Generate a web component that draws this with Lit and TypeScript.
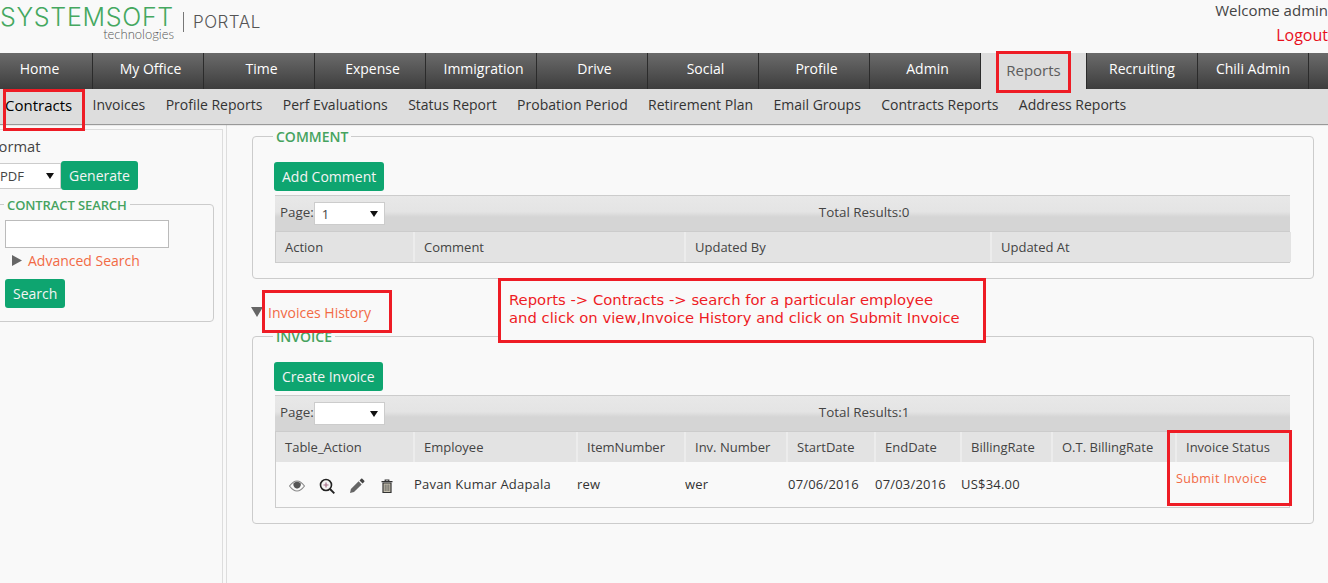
import { LitElement, html, css, svg } from 'lit';
import { customElement } from 'lit/decorators.js';

const NAV = ['Home', 'My Office', 'Time', 'Expense', 'Immigration', 'Drive', 'Social', 'Profile', 'Admin'];
const SUB = ['Invoices', 'Profile Reports', 'Perf Evaluations', 'Status Report', 'Probation Period', 'Retirement Plan', 'Email Groups', 'Contracts Reports', 'Address Reports'];

const COMMENT_COLS = [
  { label: 'Action', w: 138 },
  { label: 'Comment', w: 271 },
  { label: 'Updated By', w: 306 },
  { label: 'Updated At', w: 300 },
];

const INVOICE_COLS = [
  { label: 'Table_Action', w: 138 },
  { label: 'Employee', w: 163 },
  { label: 'ItemNumber', w: 108 },
  { label: 'Inv. Number', w: 102 },
  { label: 'StartDate', w: 88 },
  { label: 'EndDate', w: 86 },
  { label: 'BillingRate', w: 91 },
  { label: 'O.T. BillingRate', w: 124 },
  { label: 'Invoice Status', w: 115 },
];

const icons = {
  eye: svg`<path d="M.5 8C3 4.700 5.500 3 8 3s5 1.700 7.500 5C13 11.300 10.500 13 8 13S3 11.300 .5 8z" fill="none" stroke="#888" stroke-width="1.100"/><path d="M4.400 5.500C5.500 4.400 6.700 3.800 8 3.800s2.700.6 3.800 1.700c.3 2.700-1.300 5-3.700 5S4.100 8.200 4.400 5.500z" fill="#555"/>`,
  zoom: svg`<circle cx="7" cy="7" r="5.500" fill="#f4f4f4" stroke="#222" stroke-width="1.600"/><path d="M11 11l4.300 4.300" stroke="#222" stroke-width="1.900"/><path d="M4.500 7h5M7 4.500v5" stroke="#a5708a" stroke-width="1.200"/>`,
  pencil: svg`<path d="M1 15l.9-4 7.700-7.700 3.100 3.100L5 14.100z" fill="#666"/><path d="M10.500 2.400l1.700-1.700c.4-.3.8-.3 1.100 0l2 2c.3.300.3.700 0 1.100l-1.700 1.700z" fill="#444"/>`,
  trash: svg`<path d="M4 5h8v9.500H4z" fill="#c4bfae" stroke="#333" stroke-width="1.200"/><path d="M2.500 3.700h11M6.200 3.500V2h3.600v1.500" fill="none" stroke="#333" stroke-width="1.200"/><path d="M6.200 6.500v6.500M8 6.500v6.500M9.800 6.500v6.500" stroke="#555" stroke-width=".8"/>`,
};

@customElement('app-root')
export class AppRoot extends LitElement {
  static styles = css`
    :host {
      display: block;
      position: relative;
      width: 1328px;
      height: 583px;
      overflow: hidden;
      background: #f9f9f9;
      color: #444;
      font-family: 'Open Sans', sans-serif;
      font-size: 14px;
    }

    .header {
      height: 53px;
      display: flex;
      justify-content: space-between;
    }

    .logo {
      display: flex;
      align-items: flex-start;
    }

    .brand {
      width: 174px;
    }

    .brand-name {
      font-family: Inter, sans-serif;
      font-weight: 300;
      font-size: 25px;
      line-height: 28px;
      margin-top: 3px;
      letter-spacing: 0.7px;
      color: #45a860;
      white-space: nowrap;
    }

    .brand-sub {
      font-family: Lato, sans-serif;
      font-weight: 300;
      font-size: 13px;
      line-height: 12px;
      margin-top: -3px;
      text-align: right;
      color: #555;
    }

    .divider {
      width: 1px;
      height: 20px;
      background: #777;
      margin: 12px 9px 0 9px;
    }

    .portal {
      font-family: Inter, sans-serif;
      font-weight: 300;
      font-size: 17px;
      line-height: 20px;
      margin-top: 12px;
      letter-spacing: 0.5px;
      color: #555;
    }

    .user {
      text-align: right;
      font-size: 15px;
      line-height: 20px;
    }

    .logout {
      margin-top: 3px;
      color: #e8101c;
      font-size: 16px;
      line-height: 24px;
    }

    .nav {
      height: 36px;
      display: flex;
      background: linear-gradient(#6b6b6b, #3d3d3d);
    }

    .nav-item {
      box-sizing: border-box;
      width: 111px;
      border-right: 1px solid #2b2b2b;
      color: #fff;
      text-align: center;
      line-height: 32px;
      flex: none;
    }

    .nav-item.main-tab {
      padding-left: 5px;
    }

    .nav-item.first {
      width: 93px;
      padding: 0 13px 0 0;
    }

    .nav-item.active {
      width: 106px;
      background: #ddd;
      color: #5c5c5c;
      font-size: 15px;
      line-height: 34px;
    }

    .subnav {
      height: 35px;
      display: flex;
      gap: 20.4px;
      padding-left: 5px;
      background: #ddd;
      box-shadow: 0 1px 1px #999;
      line-height: 32px;
      color: #333;
      position: relative;
    }

    .subnav .current {
      color: #000;
      font-size: 15px;
    }

    .body {
      display: flex;
      height: 459px;
    }

    .side {
      width: 223px;
      height: 454px;
      margin-top: 5px;
      box-sizing: border-box;
      border-top: 1px solid #ddd;
      border-right: 1px solid #ddd;
      flex: none;
      overflow: hidden;
    }

    .format {
      margin: 6px 0 0 -9px;
      font-size: 14.7px;
      line-height: 20px;
    }

    .generate-row {
      display: flex;
      align-items: center;
      margin: 5px 0 0 -29px;
    }

    .select {
      box-sizing: border-box;
      display: flex;
      align-items: center;
      justify-content: space-between;
      height: 23px;
      background: #fff;
      border: 1px solid #ccc;
      padding: 0 6px 0 7px;
      font-size: 13px;
      color: #444;
      flex: none;
    }

    .select svg {
      width: 8px;
      height: 6px;
    }

    .select.format-select {
      width: 90px;
      height: 26px;
      padding-left: 28px;
    }

    .btn {
      display: inline-block;
      box-sizing: border-box;
      height: 29px;
      line-height: 30px;
      padding: 0 8px;
      background: #0ea570;
      border-radius: 3px;
      color: #f4f4f4;
      white-space: nowrap;
    }

    fieldset {
      margin: 0;
      padding: 0;
      border: 1px solid #ccc;
      border-radius: 4px;
      min-width: 0;
    }

    legend {
      padding: 2px 3px 0;
      color: #46a35f;
      font-weight: 600;
      line-height: 14px;
      white-space: nowrap;
    }

    .search {
      margin: 6px 0 0 -16px;
      width: 230px;
      height: 126px;
      box-sizing: border-box;
      padding: 0 0 0 20px;
    }

    .search legend {
      margin-left: -1px;
      font-size: 13px;
      letter-spacing: -0.1px;
    }

    .search-input {
      width: 164px;
      height: 28px;
      box-sizing: border-box;
      background: #fff;
      border: 1px solid #bbb;
      margin-top: 8px;
    }

    .advanced {
      display: flex;
      align-items: center;
      gap: 6px;
      height: 24px;
      margin-left: 7px;
    }

    .link {
      color: #f26a45;
    }

    .search .btn {
      margin-top: 7px;
    }

    .main {
      flex: 1;
      margin-left: 3px;
      border-left: 1px solid #ddd;
      padding: 4px 14px 0 25px;
      min-width: 0;
    }

    .panel {
      box-sizing: border-box;
      height: 151px;
      padding: 18px 21px 0;
    }

    .panel .btn {
      line-height: 29px;
    }

    .panel legend {
      margin-left: -1px;
    }

    .panel.invoice {
      height: 196px;
    }

    .history {
      display: flex;
      align-items: center;
      gap: 5px;
      height: 49px;
      padding-top: 17px;
      box-sizing: border-box;
      margin-left: -1px;
    }

    .grid-wrap {
      margin: 4px 0 0 1px;
      width: 1015px;
      box-sizing: border-box;
      border: 1px solid #ccc;
      border-top: none;
    }

    .toolbar {
      height: 37px;
      box-sizing: border-box;
      display: flex;
      align-items: center;
      padding-left: 5px;
      background: linear-gradient(#e8e8e8 0, #e4e4e4 45%, #d5d5d5 60%, #d5d5d5 100%);
      border-top: 1px solid #ccc;
      border-bottom: 1px solid #ccc;
      margin: 0 -1px;
      font-size: 13.4px;
      line-height: 20px;
    }

    .toolbar > span {
      margin-bottom: 4px;
    }

    .toolbar .select {
      width: 71px;
    }

    .toolbar > .total {
      margin-left: 434px;
    }

    table {
      border-collapse: collapse;
      table-layout: fixed;
      width: 100%;
      font-size: 13px;
    }

    th {
      height: 30px;
      padding: 0 0 0 9px;
      box-sizing: border-box;
      text-align: left;
      font-weight: 400;
      background: #e3e3e3;
      border-right: 2px solid #ececec;
      white-space: nowrap;
      overflow: hidden;
    }

    th:last-child {
      border-right: none;
    }

    td {
      box-sizing: border-box;
      height: 45px;
      padding: 0 0 2px;
      font-size: 13px;
      letter-spacing: 0.2px;
      color: #333;
      white-space: nowrap;
      overflow: hidden;
    }

    td.date {
      padding-left: 1px;
    }

    td.status {
      vertical-align: top;
      padding-top: 8px;
      font-size: 12.5px;
      letter-spacing: 0.4px;
    }

    .actions {
      display: flex;
      gap: 14px;
      padding: 4px 0 0 13px;
    }

    .actions svg {
      width: 16px;
      height: 16px;
    }

    .mark {
      position: absolute;
      box-sizing: border-box;
      border: 3px solid #ee1c25;
    }

    .mark-contracts {
      left: 3px;
      top: 89px;
      width: 82px;
      height: 42px;
    }

    .mark-reports {
      left: 996px;
      top: 51px;
      width: 75px;
      height: 42px;
    }

    .mark-history {
      left: 262px;
      top: 290px;
      width: 130px;
      height: 43px;
    }

    .mark-status {
      left: 1167px;
      top: 430px;
      width: 125px;
      height: 76px;
    }

    .note {
      position: absolute;
      left: 498px;
      top: 278px;
      width: 488px;
      height: 65px;
      box-sizing: border-box;
      border: 3px solid #ee1c25;
      background: #f9f9f9;
      padding: 10px 8px;
      font-family: 'DejaVu Sans', sans-serif;
      font-size: 14.8px;
      line-height: 18px;
      color: #ee1c25;
      white-space: nowrap;
    }
  `;

  private renderIcon(body: unknown) {
    return html`<svg viewBox="0 0 16 16">${body}</svg>`;
  }

  private renderSelect(value: string, cls = '') {
    return html`
      <div class="select ${cls}">
        <span>${value}</span>
        <svg viewBox="0 0 8 6"><path d="M0 0h8L4 6z" fill="#111" /></svg>
      </div>
    `;
  }

  private renderGrid(cols: { label: string; w: number }[], page: string, total: number, row?: unknown) {
    return html`
      <div class="grid-wrap">
        <div class="toolbar">
          <span>Page:</span>
          ${this.renderSelect(page)}
          <span class="total">Total Results:${total}</span>
        </div>
        <table>
          <colgroup>${cols.map((c) => html`<col style="width:${c.w}px" />`)}</colgroup>
          <thead>
            <tr>${cols.map((c) => html`<th>${c.label}</th>`)}</tr>
          </thead>
          ${row}
        </table>
      </div>
    `;
  }

  render() {
    const invoiceRow = html`
      <tbody>
        <tr>
          <td>
            <div class="actions">
              ${this.renderIcon(icons.eye)} ${this.renderIcon(icons.zoom)}
              ${this.renderIcon(icons.pencil)} ${this.renderIcon(icons.trash)}
            </div>
          </td>
          <td>Pavan Kumar Adapala</td>
          <td>rew</td>
          <td>wer</td>
          <td class="date">07/06/2016</td>
          <td>07/03/2016</td>
          <td>US$34.00</td>
          <td></td>
          <td class="status"><span class="link">Submit Invoice</span></td>
        </tr>
      </tbody>
    `;

    return html`
      <div class="header">
        <div class="logo">
          <div class="brand">
            <div class="brand-name">SYSTEMSOFT</div>
            <div class="brand-sub">technologies</div>
          </div>
          <div class="divider"></div>
          <div class="portal">PORTAL</div>
        </div>
        <div class="user">
          <div>Welcome admin</div>
          <div class="logout">Logout</div>
        </div>
      </div>

      <nav class="nav">
        ${NAV.map((n, i) => html`<div class="nav-item main-tab ${i === 0 ? 'first' : ''}">${n}</div>`)}
        <div class="nav-item active">Reports</div>
        <div class="nav-item">Recruiting</div>
        <div class="nav-item">Chili Admin</div>
      </nav>

      <div class="subnav">
        <span class="current">Contracts</span>
        ${SUB.map((s) => html`<span>${s}</span>`)}
      </div>

      <div class="body">
        <aside class="side">
          <div class="format">Format</div>
          <div class="generate-row">
            ${this.renderSelect('PDF', 'format-select')}
            <span class="btn">Generate</span>
          </div>
          <fieldset class="search">
            <legend>CONTRACT SEARCH</legend>
            <div class="search-input"></div>
            <div class="advanced">
              <svg width="10" height="11" viewBox="0 0 10 11"><path d="M0 0l10 5.500L0 11z" fill="#666" /></svg>
              <span class="link">Advanced Search</span>
            </div>
            <span class="btn">Search</span>
          </fieldset>
        </aside>

        <main class="main">
          <fieldset class="panel">
            <legend>COMMENT</legend>
            <span class="btn">Add Comment</span>
            ${this.renderGrid(COMMENT_COLS, '1', 0)}
          </fieldset>

          <div class="history">
            <svg width="12" height="10" viewBox="0 0 12 10"><path d="M0 0h12L6 10z" fill="#666" /></svg>
            <span class="link">Invoices History</span>
          </div>

          <fieldset class="panel invoice">
            <legend>INVOICE</legend>
            <span class="btn">Create Invoice</span>
            ${this.renderGrid(INVOICE_COLS, '', 1, invoiceRow)}
          </fieldset>
        </main>
      </div>

      <div class="mark mark-contracts"></div>
      <div class="mark mark-reports"></div>
      <div class="mark mark-history"></div>
      <div class="mark mark-status"></div>
      <div class="note">
        Reports -&gt; Contracts -&gt; search for a particular employee<br />
        and click on view,Invoice History and click on Submit Invoice
      </div>
    `;
  }
}

declare global {
  interface HTMLElementTagNameMap {
    'app-root': AppRoot;
  }
}
